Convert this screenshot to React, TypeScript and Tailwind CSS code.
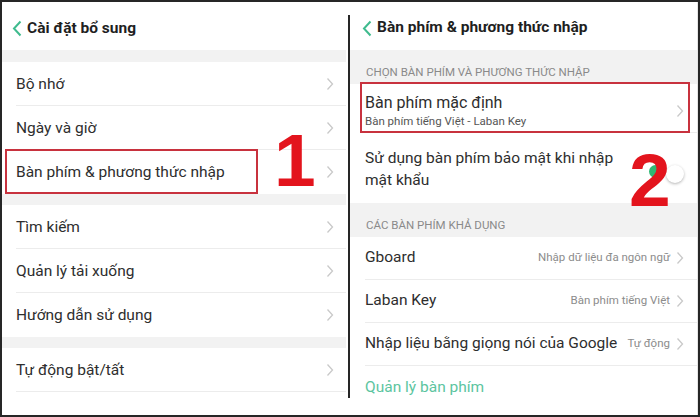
import React from "react"

const font = { fontFamily: "Roboto, 'Noto Sans', 'DejaVu Sans', sans-serif" }
const numFont = { fontFamily: "'Liberation Sans', Arial, sans-serif" }

function Chevron() {
  return (
    <svg width="8" height="14" viewBox="0 0 8 14" className="shrink-0">
      <path d="M1.5 1.5 L6.5 7 L1.5 12.5" fill="none" stroke="#c9c9c9" strokeWidth="1.3" />
    </svg>
  )
}

function Back() {
  return (
    <svg width="10" height="17" viewBox="0 0 10 17" className="shrink-0">
      <path d="M8.5 1.5 L2 8.5 L8.5 15.5" fill="none" stroke="#3fbb8e" strokeWidth="2" />
    </svg>
  )
}

function LeftRow({ label, last, marked }: { label: string; last?: boolean; marked?: boolean }) {
  return (
    <div className="relative pl-[14px]">
      <div
        className={
          "flex h-[44px] items-center pr-[12px] " + (last ? "" : "border-b border-[#ececec]")
        }
      >
        <span className="flex-1 pt-[2px] text-[15.5px] text-[#2e2e2e]">{label}</span>
        <Chevron />
      </div>
      {marked && (
        <div className="absolute left-[3px] top-[-1px] h-[45px] w-[253px] border-2 border-[#c8323e]" />
      )}
    </div>
  )
}

function RightRow({ label, value, last }: { label: string; value: string; last?: boolean }) {
  return (
    <div className="pl-[15px]">
      <div
        className={
          "flex h-[43px] items-center pr-[13px] " + (last ? "" : "border-b border-[#ececec]")
        }
      >
        <span className="flex-1 text-[15.5px] text-[#2e2e2e]">{label}</span>
        <span className="mr-[6px] text-[11.5px] text-[#8c8c8c]">{value}</span>
        <Chevron />
      </div>
    </div>
  )
}

function Band({ h }: { h: string }) {
  return <div className={"bg-[#f2f2f2] " + h} />
}

export default function App() {
  return (
    <div
      className="relative flex h-[417px] w-[700px] overflow-hidden border-2 border-[#262626] bg-white"
      style={font}
    >
      {/* left screen */}
      <div className="relative w-[344px] shrink-0">
        <div className="flex h-[48px] items-center gap-[5px] pl-[10px] pt-[5px]">
          <Back />
          <span className="text-[15.5px] font-bold text-[#1f1f1f]">Cài đặt bổ sung</span>
        </div>
        <Band h="h-[12px]" />
        <LeftRow label="Bộ nhớ" />
        <LeftRow label="Ngày và giờ" />
        <LeftRow label="Bàn phím & phương thức nhập" last marked />
        <Band h="h-[11px]" />
        <LeftRow label="Tìm kiếm" />
        <LeftRow label="Quản lý tải xuống" />
        <LeftRow label="Hướng dẫn sử dụng" last />
        <Band h="h-[11px]" />
        <LeftRow label="Tự động bật/tất" />

        <span
          className="absolute left-[272px] top-[121px] text-[75px] font-bold leading-none text-[#e3141d]"
          style={numFont}
        >
          1
        </span>
      </div>

      {/* divider */}
      <div className="flex w-[4px] shrink-0 justify-end">
        <div className="mt-[13px] h-[383px] w-[2px] bg-[#262626]" />
      </div>

      {/* right screen */}
      <div className="relative flex-1 border-r border-[#e6e6e6]">
        <div className="flex h-[48px] items-center gap-[5px] pl-[12px] pt-[4px]">
          <Back />
          <span className="text-[15.5px] font-bold text-[#1f1f1f]">Bàn phím & phương thức nhập</span>
        </div>
        <div className="flex h-[34px] items-end bg-[#f2f2f2] pb-[3px] pl-[16px]">
          <span className="text-[11.5px] text-[#8a8a8a]">CHỌN BÀN PHÍM VÀ PHƯƠNG THỨC NHẬP</span>
        </div>
        <div className="relative pl-[15px]">
          <div className="flex h-[49px] items-center border-b border-[#ececec] pr-[13px] pt-[5px]">
            <div className="flex flex-1 flex-col">
              <span className="text-[16px] leading-[20px] text-[#2e2e2e]">Bàn phím mặc định</span>
              <span className="text-[11.5px] leading-[16px] text-[#555555]">
                Bàn phím tiếng Việt - Laban Key
              </span>
            </div>
            <Chevron />
          </div>
          <div className="absolute left-[10px] top-[-2px] h-[51px] w-[330px] border-2 border-[#c8323e]" />
        </div>
        <div className="flex h-[70px] items-center pl-[15px] pr-[12px] pt-[2px]">
          <span className="w-[260px] text-[15.5px] leading-[22px] text-[#2e2e2e]">
            Sử dụng bàn phím bảo mật khi nhập mật khẩu
          </span>
          <div className="relative ml-auto mt-[10px] h-[24px] w-[44px]">
            <div className="absolute left-[8px] top-[3px] h-[13px] w-[13px] rounded-full bg-[#2fb774]" />
            <div className="absolute left-[25px] top-[3px] h-[18px] w-[18px] rounded-full bg-white shadow-[0_1px_3px_rgba(0,0,0,0.3)]" />
          </div>
        </div>
        <div className="flex h-[34px] items-end bg-[#f2f2f2] pb-[3px] pl-[16px]">
          <span className="text-[11.5px] text-[#8a8a8a]">CÁC BÀN PHÍM KHẢ DỤNG</span>
        </div>
        <RightRow label="Gboard" value="Nhập dữ liệu đa ngôn ngữ" />
        <RightRow label="Laban Key" value="Bàn phím tiếng Việt" />
        <RightRow label="Nhập liệu bằng giọng nói của Google" value="Tự động" />
        <div className="flex h-[43px] items-center pl-[15px]">
          <span className="text-[15.5px] text-[#5cc59f]">Quản lý bàn phím</span>
        </div>

        <span
          className="absolute left-[279px] top-[141px] text-[75px] font-bold leading-none text-[#e3141d]"
          style={numFont}
        >
          2
        </span>
      </div>
    </div>
  )
}
